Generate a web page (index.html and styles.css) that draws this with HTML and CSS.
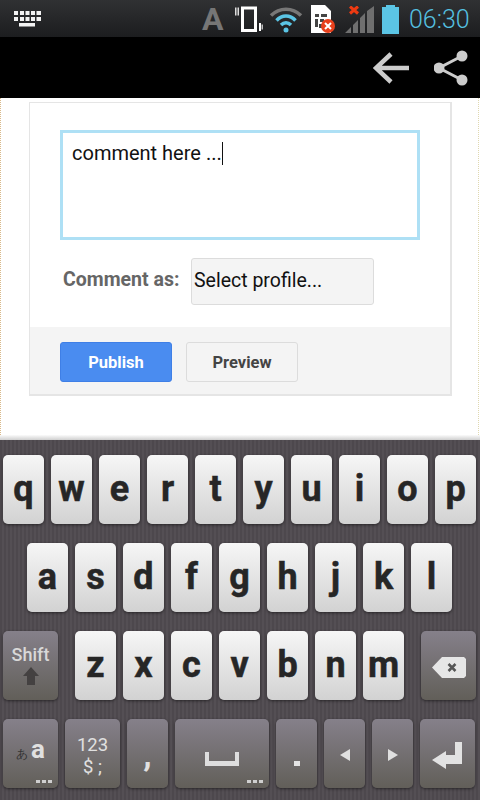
FILE: index.html
```html
<!DOCTYPE html>
<html lang="en">
<head>
  <meta charset="UTF-8">
  <meta name="viewport" content="width=device-width, initial-scale=1.0">
  <title>Comment</title>
  <link rel="stylesheet" href="styles.css">
</head>
<body>
  <div class="status-bar">
    <svg class="ic-keyboard" width="27" height="16" viewBox="0 0 27 16" fill="#f2f2f2">
      <path d="M0 0h4v4H0zM6 0h4v4H6zM11.500 0h4v4h-4zM17 0h4v4h-4zM22.500 0h4.500v4h-4.500zM0 6h4v4H0zM6 6h4v4H6zM11.500 6h4v4h-4zM17 6h4v4h-4zM22.500 6h4.500v4h-4.500zM5 12h16v3.500H5z"/>
    </svg>
    <span class="status-a">A</span>
    <svg class="ic-phone" width="28" height="27" viewBox="0 0 28 27">
      <path d="M0 1.500h1.500v8H0zM2.500 1.500h1.500v8H2.500z" fill="#ddd"/>
      <rect x="7.500" y="2" width="13" height="22.500" fill="none" stroke="#fff" stroke-width="3"/>
      <path d="M24 17h2v8h-2z" fill="#fff"/>
      <path d="M26.500 18.500h1.500v5h-1.500z" fill="#bbb"/>
    </svg>
    <svg class="ic-wifi" width="34" height="27" viewBox="0 0 34 27" fill="none">
      <path d="M2 9.500C10.500 1 23.500 1 32 9.500" stroke="#777" stroke-width="3.500"/>
      <path d="M7.500 14.500C13 8.500 21 8.500 26.500 14.500" stroke="#5bc5e5" stroke-width="3.500"/>
      <path d="M12 19c3-3 7-3 10 0" stroke="#5bc5e5" stroke-width="3.500"/>
      <circle cx="17" cy="24" r="2.500" fill="#5bc5e5"/>
    </svg>
    <svg class="ic-sim" width="26" height="29" viewBox="0 0 26 29">
      <path d="M0 0h14l6 6v22H0z" fill="#fff"/>
      <path d="M4 9h4v3H4zM10 9h6v3h-6zM4 14h3v8H4zM9 14h4v3H9zM8 19h3v4H8z" fill="#444"/>
      <circle cx="17" cy="21" r="7" fill="#e8401c"/>
      <path d="M14 18l6 6M20 18l-6 6" stroke="#fff" stroke-width="2"/>
    </svg>
    <svg class="ic-signal" width="30" height="28" viewBox="0 0 30 28">
      <path d="M0 27L6 21v6zM8 27v-8l5-5v13zM15 27V12l5-5v20zM22 27V5l7-5v27z" fill="#6f6f6f"/>
      <path d="M5 0.500l8 7M13 0.500l-8 7" stroke="#ee3a12" stroke-width="3"/>
    </svg>
    <svg class="ic-battery" width="17" height="29" viewBox="0 0 17 29">
      <path d="M4 0h9v2h4v27H0V2h4z" fill="#5bc5e5"/>
    </svg>
    <span class="status-time">06:30</span>
  </div>

  <div class="action-bar">
    <svg width="36" height="32" viewBox="0 0 36 32" fill="none" stroke="#ccc" stroke-width="4.500">
      <path d="M3 16h33M18 2L3 16l15 14"/>
    </svg>
    <svg width="35" height="36" viewBox="0 0 35 36" fill="#ccc">
      <path d="M28 6L5 18l23 12" fill="none" stroke="#ccc" stroke-width="3"/>
      <circle cx="28" cy="6" r="5.500"/>
      <circle cx="5" cy="18" r="5.500"/>
      <circle cx="28" cy="30" r="5.500"/>
    </svg>
  </div>

  <div class="content">
    <div class="comment-card">
      <div class="comment-body">
        <div class="comment-box">comment here ...<span class="caret"></span></div>
        <div class="comment-as">
          <span class="comment-label">Comment as:</span>
          <div class="profile-select">Select profile...</div>
        </div>
      </div>
      <div class="comment-footer">
        <div class="btn btn-publish">Publish</div>
        <div class="btn btn-preview">Preview</div>
      </div>
    </div>
  </div>
  <div class="keyboard-edge"></div>

  <div class="keyboard">
    <div class="key-row">
      <div class="key">q</div><div class="key">w</div><div class="key">e</div><div class="key">r</div><div class="key">t</div><div class="key">y</div><div class="key">u</div><div class="key">i</div><div class="key">o</div><div class="key">p</div>
    </div>
    <div class="key-row row-home">
      <div class="key">a</div><div class="key">s</div><div class="key">d</div><div class="key">f</div><div class="key">g</div><div class="key">h</div><div class="key">j</div><div class="key">k</div><div class="key">l</div>
    </div>
    <div class="key-row">
      <div class="key key-fn key-wide key-shift">
        <span>Shift</span>
        <svg width="16" height="18" viewBox="0 0 16 18" fill="#444141"><path d="M8 0l8 9h-4v9H4V9H0z"/></svg>
      </div>
      <div class="key row-z">z</div><div class="key">x</div><div class="key">c</div><div class="key">v</div><div class="key">b</div><div class="key">n</div><div class="key">m</div>
      <div class="key key-fn key-wide key-back">
        <svg width="34" height="21" viewBox="0 0 34 21">
          <path d="M10 0h22l2 2v17l-2 2H10L0 10.500z" fill="#e6e6e6"/>
          <path d="M16.500 7l7 7M23.500 7l-7 7" stroke="#555" stroke-width="2.500"/>
        </svg>
      </div>
    </div>
    <div class="key-row row-bottom">
      <div class="key key-fn key-wide key-lang"><small>あ</small><b>a</b><span class="dots"><i></i><i></i><i></i></span></div>
      <div class="key key-fn key-wide key-num">123<br>$ ;</div>
      <div class="key key-fn key-comma">,</div>
      <div class="key key-fn key-space">
        <svg width="34" height="14" viewBox="0 0 34 14" fill="#dedede"><path d="M0 0h4v9h26V0h4v14H0z"/></svg>
        <span class="dots"><i></i><i></i><i></i></span>
      </div>
      <div class="key key-fn key-dot"><span class="dot"></span></div>
      <div class="key key-fn key-arrow">
        <svg width="10" height="12" viewBox="0 0 10 12" fill="#e0e0e0"><path d="M10 0v12L0 6z"/></svg>
      </div>
      <div class="key key-fn key-arrow">
        <svg width="10" height="12" viewBox="0 0 10 12" fill="#e0e0e0"><path d="M0 0v12l10-6z"/></svg>
      </div>
      <div class="key key-fn key-wide key-arrow">
        <svg width="31" height="27" viewBox="0 0 31 27" fill="#e2e2e2"><path d="M23 0h7v22H14v5L0 18l14-9v4h9z"/></svg>
      </div>
    </div>
  </div>
</body>
</html>
```

FILE: styles.css
```css
body {
  margin: 0;
  height: 800px;
  overflow: hidden;
  display: flex;
  flex-direction: column;
  font-family: Roboto, sans-serif;
  background: #fff;
}

/* status bar */
.status-bar {
  height: 37px;
  flex: none;
  display: flex;
  align-items: center;
  background: linear-gradient(to bottom, #303133, #1c1d1f);
}
.ic-keyboard { margin-left: 14px; margin-top: 1px; }
.status-a {
  margin-left: 161px;
  width: 22px;
  font-size: 32px;
  font-weight: 700;
  line-height: 32px;
  color: #767676;
}
.ic-phone { margin-left: 11px; margin-top: 2px; }
.ic-wifi { margin-left: 6px; margin-top: 2px; }
.ic-sim { margin-left: 8px; margin-top: 2px; }
.ic-signal { margin-left: 8px; margin-top: 3px; }
.ic-battery { margin-left: 7px; margin-top: 2px; }
.status-time {
  margin-left: 10px;
  margin-top: 2px;
  font-size: 25px;
  font-weight: 300;
  color: #55c0e0;
}

/* action bar */
.action-bar {
  height: 61px;
  flex: none;
  background: #000;
  display: flex;
  justify-content: flex-end;
  align-items: center;
  gap: 25px;
  padding-right: 11px;
  box-sizing: border-box;
}

/* page */
.content {
  height: 337px;
  flex: none;
  box-sizing: border-box;
  margin-right: 1px;
  padding: 4px 26px 0 28px;
  border-left: 1px dotted #d9b98a;
  border-right: 1px dotted #e0d8b0;
}
.comment-card {
  width: 423px;
  box-sizing: border-box;
  border: solid #e5e5e5;
  border-width: 1px 2px 2px 1px;
}
.comment-body { padding: 27px 30px 22px; }
.comment-box {
  height: 110px;
  width: 360px;
  box-sizing: border-box;
  border: 3px solid #aee0f5;
  padding: 6px 9px;
  font-size: 20px;
  line-height: 28px;
  color: #111;
}
.caret {
  display: inline-block;
  width: 1px;
  height: 23px;
  background: #111;
  vertical-align: -5px;
}
.comment-as {
  display: flex;
  align-items: center;
  margin-top: 18px;
  padding-left: 3px;
}
.comment-label {
  width: 128px;
  padding-bottom: 4px;
  font-size: 19.5px;
  font-weight: 700;
  color: #666;
}
.profile-select {
  width: 183px;
  height: 47px;
  box-sizing: border-box;
  border: 1px solid #dcdcdc;
  border-radius: 3px;
  background: #f4f4f4;
  padding-left: 2px;
  font-size: 19.5px;
  line-height: 44px;
  color: #111;
}
.comment-footer {
  display: flex;
  gap: 14px;
  height: 67px;
  box-sizing: border-box;
  padding: 15px 30px 0;
  background: #f4f4f4;
}
.btn {
  width: 112px;
  height: 40px;
  box-sizing: border-box;
  border-radius: 3px;
  text-align: center;
  font-size: 16.5px;
  font-weight: 700;
  line-height: 39px;
}
.btn-publish { background: #4a8cf0; border: 1px solid #3f7fe6; color: #fff; }
.btn-preview { background: #f4f4f4; border: 1px solid #dcdcdc; color: #444; }

/* keyboard */
.keyboard-edge {
  height: 5px;
  flex: none;
  background: linear-gradient(to bottom, #fbfbfb, #cfcfcf);
}
.keyboard {
  flex: 1;
  box-sizing: border-box;
  padding: 15px 3px 0 3px;
  display: flex;
  flex-direction: column;
  gap: 19px;
  background: repeating-linear-gradient(to right, #4d484d 0, #4d484d 2px, #544f54 2px, #544f54 4px);
}
.key-row {
  display: flex;
  gap: 7px;
  height: 69px;
}
.row-home { padding: 0 24px; }
.key {
  width: 41px;
  flex: none;
  box-sizing: border-box;
  border-radius: 5px;
  display: flex;
  align-items: center;
  justify-content: center;
  background: linear-gradient(to bottom, #f6f6f6, #d2d2d2);
  box-shadow: 0 1px 3px rgba(0, 0, 0, 0.5);
  color: #262626;
  font-size: 36px;
  font-weight: 700;
  -webkit-text-stroke: 0.5px #262626;
  padding-bottom: 2px;
  position: relative;
}
.key-fn {
  background: linear-gradient(to bottom, #85808a, #625f59);
  color: #e0e0e0;
  -webkit-text-stroke: 0;
}
.key-wide { width: 55px; }
.row-z { margin-left: 10px; }
.key-back { margin-left: 10px; padding: 3px 0 0; }
.key-shift {
  flex-direction: column;
  gap: 2px;
  font-size: 18px;
  font-weight: 500;
  color: #d8d8d8;
}
.key-lang { font-size: 26px; align-items: baseline; padding-top: 15px; }
.key-lang small { font-size: 12px; font-weight: 400; color: #333; margin-right: 3px; }
.key-lang b { font-weight: 700; }
.dots {
  position: absolute;
  right: 6px;
  bottom: 5px;
  display: flex;
  gap: 2px;
}
.dots i { width: 4px; height: 3px; background: #cfcfcf; }
.key-num {
  display: block;
  text-align: center;
  font-size: 18.5px;
  font-weight: 400;
  line-height: 22px;
  padding-top: 15px;
  color: #e0e0e0;
}
.key-comma { font-size: 34px; padding-bottom: 0; }
.key-space { width: 94px; padding: 10px 0 0; }
.key-dot { padding: 0; }
.key-arrow { padding: 3px 0 0; }
.dot { width: 6px; height: 5px; margin-top: 20px; background: #e4e4e4; }
```
